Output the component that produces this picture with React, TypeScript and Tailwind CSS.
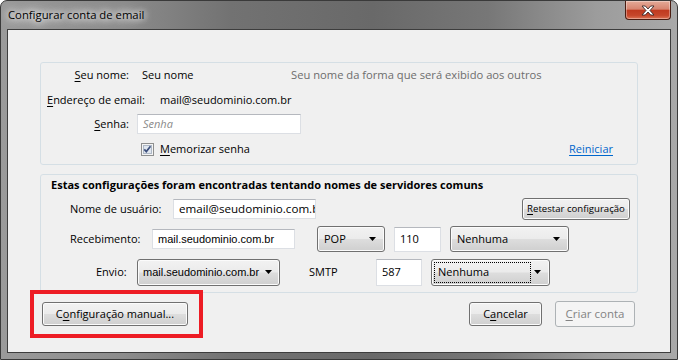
import React from 'react';

const btn =
  'flex items-center justify-center rounded-[3px] border border-[#707070] bg-[linear-gradient(180deg,#f2f2f2_0%,#ebebeb_48%,#dddddd_52%,#cfcfcf_100%)] shadow-[inset_0_0_0_1px_#fbfbfb] text-black';
const field = 'flex items-center bg-white border border-[#dcdfe4] border-t-[#b5b8be]';

function Arrow() {
  return (
    <svg width="7" height="4" viewBox="0 0 7 4" className="shrink-0">
      <path d="M0 0h7L3.5 4z" fill="#000" />
    </svg>
  );
}

function U({ children }: { children: React.ReactNode }) {
  return <span className="underline underline-offset-2">{children}</span>;
}

function CheckBox() {
  return (
    <svg width="13" height="13" viewBox="0 0 13 13" className="shrink-0">
      <rect x="0.5" y="0.5" width="12" height="12" fill="#f4f4f4" stroke="#8e8f8f" />
      <rect x="2.5" y="2.5" width="8" height="8" fill="#dfe6ef" stroke="#aeb8c6" />
      <path d="M3.3 6.4l2 2.2 4.2-5.4" fill="none" stroke="#3c4f7c" strokeWidth="1.7" />
    </svg>
  );
}

export default function App() {
  return (
    <div className="w-[678px] h-[360px] flex flex-col overflow-hidden rounded-t-[7px] border border-[#3a3a3a] bg-[linear-gradient(90deg,#9a9a9a_0%,#8c8c8c_18%,#727272_34%,#696969_55%,#777777_72%,#9c9c9c_88%,#a9a9a9_100%)] font-['Open_Sans',sans-serif] text-[11px] text-black">
      {/* title bar */}
      <div className="h-[28px] flex items-start justify-between pl-[7px] pr-[6px]">
        <span className="text-[11.3px] leading-[28px] [text-shadow:0_0_6px_#ffffff,0_0_10px_#ffffff,0_0_14px_#ffffff]">
          Configurar conta de email
        </span>
        <div className="w-[46px] h-[19px] flex items-center justify-center rounded-b-[4px] border border-t-0 border-[#4a1d12] bg-[linear-gradient(180deg,#e4aa98_0%,#d78570_45%,#c03a1f_52%,#c6472b_80%,#dd7454_100%)] shadow-[inset_0_0_0_1px_rgba(255,255,255,0.35)]">
          <svg width="14" height="11" viewBox="0 0 14 11">
            <path
              d="M1 1h3.3l2.7 3 2.7-3H13L9 5.5 13 10H9.7L7 7 4.3 10H1l4-4.5z"
              fill="#ffffff"
              stroke="#3a2a2a"
              strokeWidth="0.9"
              strokeLinejoin="round"
            />
          </svg>
        </div>
      </div>

      {/* client area */}
      <div className="flex-1 mx-[6px] mb-[6px] flex flex-col border border-[#3d3d3d] bg-[#f0f0f0]">
        {/* account group */}
        <div className="mt-[32px] mx-[32px] pt-[2px] pb-[5px] flex flex-col rounded-[3px] border border-[#d5dfe5]">
          <div className="h-[20px] flex items-center">
            <span className="w-[88px] text-right">
              <U>S</U>eu nome:
            </span>
            <span className="ml-[13px] w-[149px]">Seu nome</span>
            <span className="text-[#6d6d6d] text-[11.2px]">Seu nome da forma que será exibido aos outros</span>
          </div>
          <div className="mt-[5px] h-[20px] flex items-center">
            <span className="w-[119px] pl-[6px]">
              <U>E</U>ndereço de email:
            </span>
            <span>mail@seudominio.com.br</span>
          </div>
          <div className="mt-[4px] h-[20px] flex items-center">
            <span className="w-[88px] text-right">
              <U>S</U>enha:
            </span>
            <div className={`${field} ml-[8px] w-[164px] h-[20px] pl-[5px] italic text-[#8a8a8a]`}>Senha</div>
          </div>
          <div className="mt-[5px] h-[20px] flex items-center">
            <span className="w-[100px]" />
            <CheckBox />
            <span className="ml-[6px]">
              <U>M</U>emorizar senha
            </span>
            <span className="ml-auto mr-[24px] text-[#0066cc] underline underline-offset-2">Reiniciar</span>
          </div>
        </div>

        {/* servers group */}
        <div className="mt-[9px] mx-[32px] pt-[2px] pb-[6px] flex flex-col rounded-[3px] border border-[#d5dfe5]">
          <div className="h-[16px] pl-[10px] flex items-center font-bold">
            Estas configurações foram encontradas tentando nomes de servidores comuns
          </div>
          <div className="mt-[5px] h-[22px] flex items-center">
            <span className="w-[132px] pl-[29px]">Nome de usuário:</span>
            <div className={`${field} w-[143px] h-[20px] pl-[5px] overflow-hidden whitespace-nowrap text-[11.6px]`}>
              email@seudominio.com.br
            </div>
            <button className={`${btn} ml-auto mr-[7px] w-[108px] h-[22px] text-[9.6px]`}>
              <span>
                <U>R</U>etestar configuração
              </span>
            </button>
          </div>
          <div className="mt-[6px] h-[26px] flex items-center">
            <span className="w-[111px] pl-[29px]">Recebimento:</span>
            <div className={`${field} w-[143px] h-[20px] pl-[5px] font-['Liberation_Sans',sans-serif]`}>
              mail.seudominio.com.br
            </div>
            <div className={`${btn} ml-[22px] w-[68px] h-[26px] !justify-between pl-[6px] pr-[8px]`}>
              <span>POP</span>
              <Arrow />
            </div>
            <div className={`${field} ml-[9px] w-[47px] h-[25px] pl-[5px] !items-start pt-[3px]`}>110</div>
            <div className={`${btn} ml-[9px] w-[119px] h-[26px] !justify-between pl-[6px] pr-[8px]`}>
              <span>Nenhuma</span>
              <Arrow />
            </div>
          </div>
          <div className="mt-[6px] h-[28px] flex items-center">
            <span className="w-[96px] pl-[55px]">Envio:</span>
            <div className={`${btn} w-[143px] h-[27px] !justify-between pl-[5px] pr-[7px] font-['Liberation_Sans',sans-serif]`}>
              <span>mail.seudominio.com.br</span>
              <Arrow />
            </div>
            <span className="ml-[29px] w-[67px]">SMTP</span>
            <div className={`${field} w-[46px] h-[27px] pl-[5px] !items-start pt-[4px]`}>587</div>
            <div className={`${btn} ml-[9px] w-[119px] h-[27px] !justify-between pl-[2px] pr-[8px]`}>
              <span className="w-[97px] h-[21px] flex items-center pl-[3px] border border-dotted border-black">
                Nenhuma
              </span>
              <Arrow />
            </div>
          </div>
        </div>

        {/* bottom buttons */}
        <div className="mt-[8px] flex items-center">
          <div className="relative ml-[34px]">
            <button className={`${btn} w-[146px] h-[24px]`}>
              <span>
                C<U>o</U>nfiguração manual...
              </span>
            </button>
            <span className="pointer-events-none absolute -left-[12px] -top-[12px] -right-[15px] -bottom-[12px] border-4 border-[#ed1c24]" />
          </div>
          <button className={`${btn} ml-auto w-[73px] h-[24px]`}>
            <span>
              C<U>a</U>ncelar
            </span>
          </button>
          <button className="ml-[13px] mr-[35px] w-[80px] h-[26px] flex items-center justify-center rounded-[3px] border border-[#adb2b5] bg-[#f4f4f4] text-[#838383] text-[11.5px]">
            <span>
              <U>C</U>riar conta
            </span>
          </button>
        </div>
      </div>
    </div>
  );
}
